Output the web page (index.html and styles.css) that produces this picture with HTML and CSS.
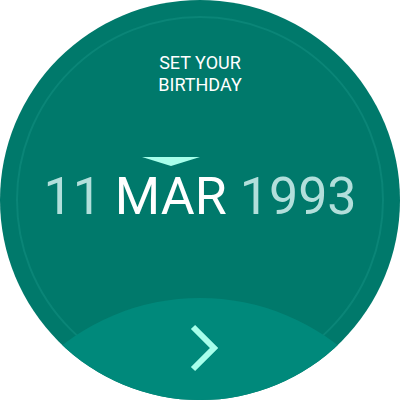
FILE: index.html
```html
<!DOCTYPE html>
<html>
<head>
<meta charset="utf-8">
<link rel="stylesheet" href="styles.css">
</head>
<body>
<div class="watch">
  <div class="ring"></div>
  <div class="title">SET YOUR<br>BIRTHDAY</div>
  <div class="date">
    <span class="part dim">11</span>
    <span class="part current">
      <span class="marker"></span>
      <span>MAR</span>
    </span>
    <span class="part dim">1993</span>
  </div>
  <div class="next">
    <svg class="chev" width="40" height="60" viewBox="0 0 40 60">
      <polyline points="9,9 30,30 9,51" fill="none" stroke="#A7FFEB" stroke-width="6" stroke-linejoin="miter" stroke-linecap="butt"/>
    </svg>
  </div>
</div>
</body>
</html>
```
FILE: styles.css
```css
html, body {
  margin: 0;
  padding: 0;
  background: #ffffff;
}
.watch {
  position: relative;
  width: 400px;
  height: 400px;
  border-radius: 50%;
  overflow: hidden;
  background: #00796B;
  display: flex;
  flex-direction: column;
  align-items: center;
  font-family: Roboto, "Noto Sans", sans-serif;
  padding-top: 52px;
  box-sizing: border-box;
}
.ring {
  position: absolute;
  left: 16px;
  top: 16px;
  width: 368px;
  height: 368px;
  border-radius: 50%;
  border: 2px solid #0A8577;
  box-sizing: border-box;
}
.title {
  position: relative;
  color: #ffffff;
  font-size: 18px;
  line-height: 22px;
  text-align: center;
}
.date {
  position: relative;
  margin-top: 61px;
  display: flex;
  align-items: flex-end;
  gap: 13px;
  font-size: 52px;
  line-height: 52px;
  font-weight: 400;
}
.part {
  display: flex;
  flex-direction: column;
  align-items: center;
}
.dim {
  color: #B2DFDB;
}
.current {
  color: #ffffff;
}
.marker {
  width: 0;
  height: 0;
  border-left: 29.5px solid transparent;
  border-right: 29.5px solid transparent;
  border-top: 9px solid #A7FFEB;
  margin-bottom: 5px;
}
.next {
  position: absolute;
  left: -25px;
  top: 298px;
  width: 450px;
  height: 450px;
  border-radius: 50%;
  background: #00897B;
  display: flex;
  justify-content: center;
  align-items: flex-start;
}
.chev {
  margin-top: 20px;
  margin-left: 8px;
}
```
